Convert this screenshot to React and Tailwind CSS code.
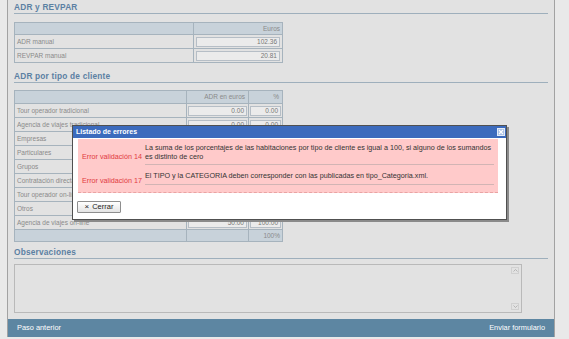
import React from "react";

const rows2 = [
  ["Tour operador tradicional", "0.00", "0.00"],
  ["Agencia de viajes tradicional", "0.00", "0.00"],
  ["Empresas", "0.00", "0.00"],
  ["Particulares", "0.00", "0.00"],
  ["Grupos", "0.00", "0.00"],
  ["Contratación directa", "0.00", "0.00"],
  ["Tour operador on-line", "0.00", "0.00"],
  ["Otros", "0.00", "0.00"],
  ["Agencia de viajes on-line", "50.00", "100.00"],
];

function Title({ children }) {
  return (
    <div className="h-[12px] border-b border-[#9eafbc] leading-[11px] text-[8.3px] font-bold text-[#5b80a2] tracking-[0.2px]">
      {children}
    </div>
  );
}

function Box({ children }) {
  return (
    <div className="h-[10px] w-full border border-[#b6bec6] bg-[#ebebeb] text-right pr-[2px] leading-[8px] text-[6.5px] text-[#777]">
      {children}
    </div>
  );
}

export default function App() {
  return (
    <div className="relative w-[569px] h-[339px] overflow-hidden bg-[#e9e9e9] flex font-['Liberation_Sans',Arial,sans-serif]">
      <div className="w-[7px] shrink-0" />
      <div className="w-[548px] h-[337px] shrink-0 border-l border-r border-[#a2a2a2] bg-[#e2e2e2] flex flex-col">
        <div className="px-[6px] pt-[2px] flex flex-col">
          <Title>ADR y REVPAR</Title>
          <div className="mt-[8px] w-[269px] border border-[#a6b3bd] text-[6.5px] text-[#8a8a8a]">
            <div className="flex h-[12px] bg-[#c8d2da] border-b border-[#a6b3bd]">
              <div className="w-[179px] border-r border-[#a6b3bd]" />
              <div className="flex-1 text-right pr-[2px] leading-[11px]">Euros</div>
            </div>
            <div className="flex h-[14px] border-b border-[#a6b3bd]">
              <div className="w-[179px] border-r border-[#a6b3bd] pl-[2px] leading-[13px]">ADR manual</div>
              <div className="flex-1 flex items-center px-[2px]"><Box>102.36</Box></div>
            </div>
            <div className="flex h-[13px]">
              <div className="w-[179px] border-r border-[#a6b3bd] pl-[2px] leading-[13px]">REVPAR manual</div>
              <div className="flex-1 flex items-center px-[2px]"><Box>20.81</Box></div>
            </div>
          </div>

          <div className="mt-[8px]">
            <Title>ADR por tipo de cliente</Title>
          </div>
          <div className="mt-[7px] w-[269px] border border-[#a6b3bd] text-[6.5px] text-[#8a8a8a]">
            <div className="flex h-[13px] bg-[#c8d2da] border-b border-[#a6b3bd]">
              <div className="w-[172px] border-r border-[#a6b3bd]" />
              <div className="w-[62px] border-r border-[#a6b3bd] text-right pr-[3px] leading-[12px]">ADR en euros</div>
              <div className="flex-1 text-right pr-[3px] leading-[12px]">%</div>
            </div>
            {rows2.map(([l, a, p]) => (
              <div key={l} className="flex h-[14px] border-b border-[#a6b3bd]">
                <div className="w-[172px] border-r border-[#a6b3bd] pl-[2px] leading-[13px]">{l}</div>
                <div className="w-[62px] border-r border-[#a6b3bd] flex items-center px-[1px]"><Box>{a}</Box></div>
                <div className="flex-1 flex items-center px-[1px]"><Box>{p}</Box></div>
              </div>
            ))}
            <div className="flex h-[11px] bg-[#c8d2da]">
              <div className="w-[172px] border-r border-[#a6b3bd]" />
              <div className="w-[62px] border-r border-[#a6b3bd]" />
              <div className="flex-1 text-right pr-[2px] leading-[11px]">100%</div>
            </div>
          </div>

          <div className="mt-[5px]">
            <Title>Observaciones</Title>
          </div>
          <div className="mt-[5px] w-[508px] h-[49px] border border-[#b9b9b9] bg-[#e2e2e2] flex justify-end">
            <div className="w-[9px] flex flex-col justify-between py-[2px] mr-[1px]">
              <div className="h-[7px] w-[8px] border border-[#d0d0d0] flex items-center justify-center">
                <svg width="5" height="3" viewBox="0 0 5 3"><path d="M0.5 2.5 L2.5 0.5 L4.5 2.5" stroke="#aaa" strokeWidth="0.8" fill="none" /></svg>
              </div>
              <div className="h-[7px] w-[8px] border border-[#d0d0d0] flex items-center justify-center">
                <svg width="5" height="3" viewBox="0 0 5 3"><path d="M0.5 0.5 L2.5 2.5 L4.5 0.5" stroke="#aaa" strokeWidth="0.8" fill="none" /></svg>
              </div>
            </div>
          </div>
        </div>

        <div className="mt-auto h-[18px] bg-[#5d86a2] flex items-center justify-between px-[9px] text-[7.4px] text-white">
          <span>Paso anterior</span>
          <span>Enviar formulario</span>
        </div>
      </div>

      <div className="absolute left-[72px] top-[125px] w-[435px] h-[95px] bg-white border border-[#505050] shadow-[2px_2px_0_#8a8a8a] flex flex-col">
        <div className="relative h-[12px] bg-[#3c6bbd] text-white font-bold text-[7px] leading-[12px] pl-[3px]">
          Listado de errores
          <div className="absolute right-[1px] top-[2px] w-[8px] h-[8px] bg-[#a9c0e6] border border-[#e4ecf8] flex items-center justify-center">
            <svg width="6" height="6" viewBox="0 0 6 6"><path d="M1 1 L5 5 M5 1 L1 5" stroke="#fff" strokeWidth="1.1" /></svg>
          </div>
        </div>
        <div className="mt-[1px] ml-[5px] w-[420px] bg-[#ffcaca] border-b border-dashed border-[#e9a3a3] text-[7.2px]">
          <div className="flex h-[26px]">
            <div className="w-[67px] pl-[4px] self-end pb-[4px] leading-[9px] text-[#e23a3f]">Error validación 14</div>
            <div className="flex-1 mr-[4px] pt-[4px] border-b border-[#d2b4b4] leading-[9px] text-[#333]">
              La suma de los porcentajes de las habitaciones por tipo de cliente es igual a 100, si alguno de los sumandos<br />es distinto de cero
            </div>
          </div>
          <div className="flex h-[27px]">
            <div className="w-[67px] pl-[4px] pt-[11px] leading-[9px] text-[#e23a3f]">Error validación 17</div>
            <div className="flex-1 mr-[4px] h-[20px] pt-[6px] border-b border-[#d2b4b4] leading-[9px] text-[#333]">
              El TIPO y la CATEGORIA deben corresponder con las publicadas en tipo_Categoria.xml.
            </div>
          </div>
        </div>
        <div className="mt-[8px] ml-[4px] w-[44px] h-[12px] border border-[#8e8e8e] rounded-[1px] bg-gradient-to-b from-white to-[#e4e4e4] flex items-center justify-center gap-[3px] text-[7.5px] text-[#222]">
          <span className="text-[8px] leading-[8px]">×</span>
          <span className="leading-[8px]">Cerrar</span>
        </div>
      </div>
    </div>
  );
}
